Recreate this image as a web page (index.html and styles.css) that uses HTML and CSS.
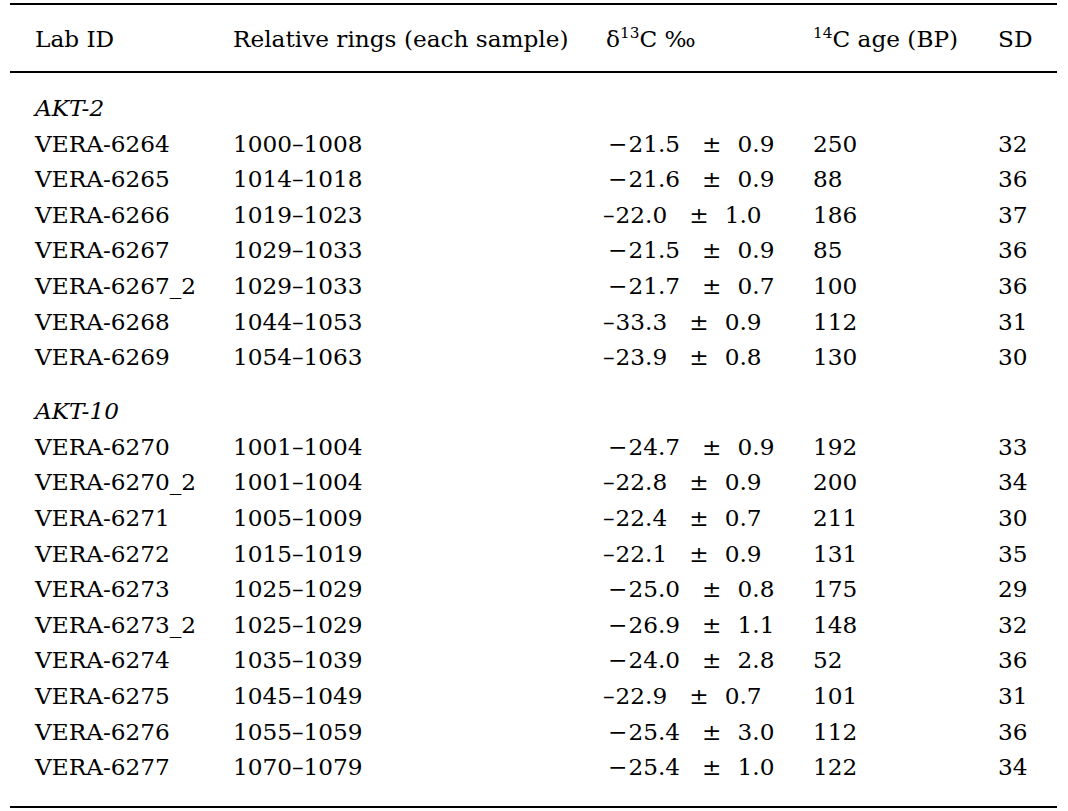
FILE: index.html
```html
<!DOCTYPE html>
<html>
<head>
<meta charset="utf-8">
<link rel="stylesheet" href="styles.css">
</head>
<body>
<table class="data">
  <colgroup>
    <col class="c1"><col class="c2"><col class="c3"><col class="c4"><col class="c5">
  </colgroup>
  <thead>
    <tr>
      <th>Lab ID</th>
      <th>Relative rings (each sample)</th>
      <th>δ<sup>13</sup>C ‰</th>
      <th><sup>14</sup>C age (BP)</th>
      <th>SD</th>
    </tr>
  </thead>
  <tbody>
    <tr class="pad-top"><td colspan="5"></td></tr>
    <tr class="group"><td colspan="5">AKT-2</td></tr>
    <tr><td>VERA-6264</td><td>1000–1008</td><td class="d">−<span class="v">21.5</span><span class="pm">±</span>0.9</td><td>250</td><td>32</td></tr>
    <tr><td>VERA-6265</td><td>1014–1018</td><td class="d">−<span class="v">21.6</span><span class="pm">±</span>0.9</td><td>88</td><td>36</td></tr>
    <tr><td>VERA-6266</td><td>1019–1023</td><td class="e">–<span class="v">22.0</span><span class="pm">±</span>1.0</td><td>186</td><td>37</td></tr>
    <tr><td>VERA-6267</td><td>1029–1033</td><td class="d">−<span class="v">21.5</span><span class="pm">±</span>0.9</td><td>85</td><td>36</td></tr>
    <tr><td>VERA-6267_2</td><td>1029–1033</td><td class="d">−<span class="v">21.7</span><span class="pm">±</span>0.7</td><td>100</td><td>36</td></tr>
    <tr><td>VERA-6268</td><td>1044–1053</td><td class="e">–<span class="v">33.3</span><span class="pm">±</span>0.9</td><td>112</td><td>31</td></tr>
    <tr><td>VERA-6269</td><td>1054–1063</td><td class="e">–<span class="v">23.9</span><span class="pm">±</span>0.8</td><td>130</td><td>30</td></tr>
    <tr class="gap"><td colspan="5"></td></tr>
    <tr class="group"><td colspan="5">AKT-10</td></tr>
    <tr><td>VERA-6270</td><td>1001–1004</td><td class="d">−<span class="v">24.7</span><span class="pm">±</span>0.9</td><td>192</td><td>33</td></tr>
    <tr><td>VERA-6270_2</td><td>1001–1004</td><td class="e">–<span class="v">22.8</span><span class="pm">±</span>0.9</td><td>200</td><td>34</td></tr>
    <tr><td>VERA-6271</td><td>1005–1009</td><td class="e">–<span class="v">22.4</span><span class="pm">±</span>0.7</td><td>211</td><td>30</td></tr>
    <tr><td>VERA-6272</td><td>1015–1019</td><td class="e">–<span class="v">22.1</span><span class="pm">±</span>0.9</td><td>131</td><td>35</td></tr>
    <tr><td>VERA-6273</td><td>1025–1029</td><td class="d">−<span class="v">25.0</span><span class="pm">±</span>0.8</td><td>175</td><td>29</td></tr>
    <tr><td>VERA-6273_2</td><td>1025–1029</td><td class="d">−<span class="v">26.9</span><span class="pm">±</span>1.1</td><td>148</td><td>32</td></tr>
    <tr><td>VERA-6274</td><td>1035–1039</td><td class="d">−<span class="v">24.0</span><span class="pm">±</span>2.8</td><td>52</td><td>36</td></tr>
    <tr><td>VERA-6275</td><td>1045–1049</td><td class="e">–<span class="v">22.9</span><span class="pm">±</span>0.7</td><td>101</td><td>31</td></tr>
    <tr><td>VERA-6276</td><td>1055–1059</td><td class="d">−<span class="v">25.4</span><span class="pm">±</span>3.0</td><td>112</td><td>36</td></tr>
    <tr><td>VERA-6277</td><td>1070–1079</td><td class="d">−<span class="v">25.4</span><span class="pm">±</span>1.0</td><td>122</td><td>34</td></tr>
    <tr class="pad-bottom"><td colspan="5"></td></tr>
  </tbody>
</table>
</body>
</html>
```
FILE: styles.css
```css
html, body {
  margin: 0;
  padding: 0;
  background: #fff;
}
body {
  padding: 3px 11px 0 10px;
  font-family: "DejaVu Serif", "Liberation Serif", serif;
  font-size: 23.2px;
  color: #000;
}
.data {
  width: 1047px;
  border-collapse: collapse;
  table-layout: fixed;
  border-top: 2px solid #000;
  border-bottom: 2px solid #000;
}
.c1 { width: 198px; }
.c2 { width: 373px; }
.c3 { width: 207px; }
.c4 { width: 185px; }
.c5 { width: 84px; }
.data th {
  font-weight: normal;
  text-align: left;
  height: 66px;
  padding: 0 0 0 25px;
  line-height: 35px;
  border-bottom: 2px solid #000;
  white-space: nowrap;
}
.data td {
  padding: 0 0 0 25px;
  height: 35.6px;
  line-height: 35.6px;
  white-space: nowrap;
}
.data sup {
  font-size: 0.66em;
  line-height: 0;
  vertical-align: 0.6em;
}
.data .pad-top td { height: 17px; padding: 0; }
.data .gap td { height: 18.5px; padding: 0; }
.data .pad-bottom td { height: 21px; padding: 0; }
.data .group td { font-style: italic; }
.data td.d { padding-left: 27px; }
.data td.e { padding-left: 22px; }
.data td.d .v { margin-left: 1px; }
.data td.e .v { margin-left: 1px; }
.data .pm { margin: 0 16px 0 22px; }
```
